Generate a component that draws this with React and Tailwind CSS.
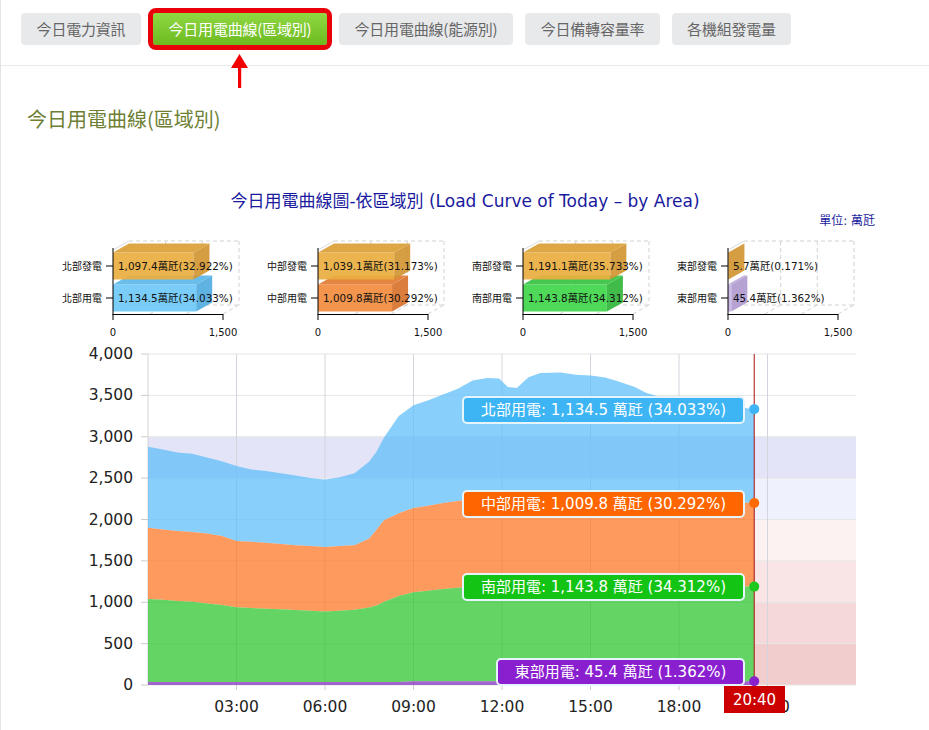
import React from 'react';

const tabs = [
  ['今日電力資訊', 'w-[120px]'],
  ['今日用電曲線(區域別)', 'w-[174px]'],
  ['今日用電曲線(能源別)', 'w-[174px]'],
  ['今日備轉容量率', 'w-[135px]'],
  ['各機組發電量', 'w-[119px]'],
];

// cumulative tops: [hour, 東部, +南部, +中部, +北部]
const rows = [
  [0, 35, 1040, 1900, 2880],
  [0.5, 35, 1030, 1880, 2845],
  [1, 35, 1015, 1862, 2810],
  [1.5, 35, 1005, 1850, 2795],
  [2, 35, 985, 1830, 2750],
  [2.5, 35, 965, 1800, 2705],
  [3, 35, 940, 1740, 2645],
  [3.5, 35, 930, 1730, 2605],
  [4, 35, 922, 1720, 2585],
  [4.5, 35, 915, 1705, 2560],
  [5, 35, 905, 1690, 2530],
  [5.5, 35, 898, 1680, 2500],
  [6, 35, 890, 1668, 2485],
  [6.5, 35, 898, 1680, 2510],
  [7, 35, 910, 1690, 2560],
  [7.5, 35, 935, 1770, 2700],
  [7.75, 35, 960, 1880, 2820],
  [8, 35, 1005, 1990, 2990],
  [8.5, 38, 1075, 2075, 3250],
  [9, 45, 1120, 2140, 3380],
  [9.5, 45, 1140, 2165, 3440],
  [10, 45, 1160, 2200, 3510],
  [10.5, 45, 1175, 2225, 3580],
  [11, 45, 1185, 2245, 3680],
  [11.5, 45, 1195, 2260, 3710],
  [11.9, 45, 1200, 2270, 3705],
  [12.2, 45, 1196, 2256, 3600],
  [12.5, 45, 1198, 2258, 3590],
  [12.9, 45, 1204, 2272, 3720],
  [13.3, 45, 1208, 2285, 3770],
  [14, 45, 1210, 2300, 3775],
  [14.5, 45, 1208, 2295, 3750],
  [15, 45, 1205, 2290, 3740],
  [15.5, 45, 1203, 2285, 3715],
  [16, 45, 1200, 2280, 3662],
  [16.5, 45, 1198, 2270, 3600],
  [16.9, 45, 1196, 2262, 3530],
  [17.5, 45, 1195, 2250, 3470],
  [18, 45, 1194, 2240, 3445],
  [18.5, 45, 1193, 2230, 3420],
  [19, 45, 1192, 2220, 3400],
  [19.5, 45, 1191, 2212, 3380],
  [20, 45, 1190, 2205, 3360],
  [20.55, 45.4, 1189.2, 2199.2, 3333.5],
];

const X = (h) => 147 + h * 29.5;
const Y = (v) => 344 - (v * 331) / 4000;

function areaPath(lo, hi) {
  const top = rows.map((r) => `${X(r[0]).toFixed(1)},${Y(r[hi]).toFixed(1)}`);
  const bot = rows
    .slice()
    .reverse()
    .map((r) => `${X(r[0]).toFixed(1)},${Y(lo < 0 ? 0 : r[lo]).toFixed(1)}`);
  return 'M' + top.join('L') + 'L' + bot.join('L') + 'Z';
}

const minis = [
  {
    labels: ['北部發電', '北部用電'],
    bars: [
      { v: 1097.4, text: '1,097.4萬瓩(32.922%)', c: ['#ebae40', '#dca037', '#d39633'] },
      { v: 1134.5, text: '1,134.5萬瓩(34.033%)', c: ['#6ec9f8', '#5cb8ea', '#52ade0'] },
    ],
  },
  {
    labels: ['中部發電', '中部用電'],
    bars: [
      { v: 1039.1, text: '1,039.1萬瓩(31.173%)', c: ['#ebae40', '#dca037', '#d39633'] },
      { v: 1009.8, text: '1,009.8萬瓩(30.292%)', c: ['#f38d3e', '#e27b31', '#d8722c'] },
    ],
  },
  {
    labels: ['南部發電', '南部用電'],
    bars: [
      { v: 1191.1, text: '1,191.1萬瓩(35.733%)', c: ['#ebae40', '#dca037', '#d39633'] },
      { v: 1143.8, text: '1,143.8萬瓩(34.312%)', c: ['#41d64c', '#37c341', '#31b73b'] },
    ],
  },
  {
    labels: ['東部發電', '東部用電'],
    bars: [
      { v: 5.7, text: '5.7萬瓩(0.171%)', c: ['#ebae40', '#dca037', '#d39633'] },
      { v: 45.4, text: '45.4萬瓩(1.362%)', c: ['#c8b5e4', '#b9a5d9', '#b09cd1'] },
    ],
  },
];

function Bar({ v, y0, c }) {
  const w = (v / 1500) * 110;
  const x0 = 72;
  const h = 27;
  return (
    <g opacity="0.92">
      <rect x={x0} y={y0} width={w} height={h} fill={c[0]} />
      <polygon points={`${x0},${y0} ${x0 + 16},${y0 - 9} ${x0 + w + 16},${y0 - 9} ${x0 + w},${y0}`} fill={c[1]} />
      <polygon
        points={`${x0 + w},${y0} ${x0 + w + 16},${y0 - 9} ${x0 + w + 16},${y0 + h - 9} ${x0 + w},${y0 + h}`}
        fill={c[2]}
      />
    </g>
  );
}

function Mini({ data }) {
  const dash = { stroke: '#d2d2d2', strokeDasharray: '4 3' };
  return (
    <svg width="205" height="112" className="shrink-0 font-['DejaVu_Sans','Noto_Sans_CJK_TC',sans-serif]">
      <line x1="72" y1="21" x2="88" y2="12" stroke="#dcdcdc" />
      <line x1="88" y1="12" x2="198" y2="12" {...dash} />
      <line x1="198" y1="12" x2="198" y2="76" {...dash} />
      <line x1="88" y1="76" x2="198" y2="76" {...dash} />
      <line x1="124.7" y1="12" x2="124.7" y2="76" {...dash} />
      <line x1="161.3" y1="12" x2="161.3" y2="76" {...dash} />
      <line x1="108.7" y1="85" x2="124.7" y2="76" {...dash} />
      <line x1="145.3" y1="85" x2="161.3" y2="76" {...dash} />
      <line x1="182" y1="85" x2="198" y2="76" {...dash} />
      <Bar v={data.bars[1].v} y0={55.5} c={data.bars[1].c} />
      <Bar v={data.bars[0].v} y0={23.5} c={data.bars[0].c} />
      <line x1="72" y1="19" x2="72" y2="86" stroke="#000" />
      <line x1="72" y1="85.5" x2="182" y2="85.5" stroke="#000" />
      <line x1="65" y1="37" x2="72" y2="37" stroke="#000" />
      <line x1="65" y1="69" x2="72" y2="69" stroke="#000" />
      <line x1="182" y1="85" x2="182" y2="91" stroke="#000" />
      <line x1="72" y1="85" x2="72" y2="91" stroke="#000" />
      {data.labels.map((l, i) => (
        <text key={l} x="61" y={37 + i * 32} fontSize="10" textAnchor="end" dominantBaseline="central" fill="#111">
          {l}
        </text>
      ))}
      {data.bars.map((b, i) => (
        <text key={b.text} x="77" y={37 + i * 32} fontSize="10.4" dominantBaseline="central" fill="#111">
          {b.text}
        </text>
      ))}
      <text x="72" y="103" fontSize="10" textAnchor="middle" dominantBaseline="central" fill="#111">
        0
      </text>
      <text x="182" y="103" fontSize="10" textAnchor="middle" dominantBaseline="central" fill="#111">
        1,500
      </text>
    </svg>
  );
}

const tips = [
  { text: '北部用電: 1,134.5 萬瓩 (34.033%)', cls: 'left-[461px] top-[55px] w-[283px] bg-[#3db5f5]' },
  { text: '中部用電: 1,009.8 萬瓩 (30.292%)', cls: 'left-[461px] top-[149px] w-[283px] bg-[#ff6600]' },
  { text: '南部用電: 1,143.8 萬瓩 (34.312%)', cls: 'left-[461px] top-[232px] w-[283px] bg-[#14c414]' },
  { text: '東部用電: 45.4 萬瓩 (1.362%)', cls: 'left-[495px] top-[317px] w-[249px] bg-[#8a1fd0]' },
];

function MainChart() {
  const lineX = X(20.55);
  const yTicks = [0, 500, 1000, 1500, 2000, 2500, 3000, 3500, 4000];
  const xTicks = [3, 6, 9, 12, 15, 18, 21];
  const bands = [
    [2000, 2500, '#eff1fc'],
    [1500, 2000, '#fdf2f2'],
    [1000, 1500, '#f9e5e6'],
    [500, 1000, '#f5d8da'],
    [0, 500, '#f2cdcd'],
  ];
  const last = rows[rows.length - 1];
  return (
    <div className="relative h-[389px] w-full">
      <svg width="929" height="389" className="block font-['DejaVu_Sans','Noto_Sans_CJK_TC',sans-serif]">
        <rect x="147" y={Y(3000)} width="708" height={Y(2500) - Y(3000)} fill="#e3e4f7" />
        {bands.map(([a, b, c]) => (
          <rect key={a} x={lineX} y={Y(b)} width={855 - lineX} height={Y(a) - Y(b)} fill={c} />
        ))}
        {yTicks.map((v) => (
          <g key={v}>
            <line x1="147" y1={Y(v)} x2="855" y2={Y(v)} stroke="#e6e6e6" />
            <line x1="140" y1={Y(v)} x2="147" y2={Y(v)} stroke="#cccccc" />
            <text x="132" y={Y(v)} fontSize="15.5" textAnchor="end" dominantBaseline="central" fill="#222">
              {v.toLocaleString('en-US')}
            </text>
          </g>
        ))}
        {xTicks.map((h) => (
          <g key={h}>
            <line x1={X(h)} y1="13" x2={X(h)} y2="344" stroke="#d4d4de" />
            <line x1={X(h)} y1="344" x2={X(h)} y2="349" stroke="#cccccc" />
            <text x={X(h)} y="366" fontSize="15.5" textAnchor="middle" dominantBaseline="central" fill="#222">
              {String(h).padStart(2, '0')}:00
            </text>
          </g>
        ))}
        <line x1="147" y1="13" x2="147" y2="344" stroke="#d4d4d4" />
        <path d={areaPath(3, 4)} fill="#60bffa" fillOpacity="0.75" />
        <path d={areaPath(2, 3)} fill="#fe7828" fillOpacity="0.75" />
        <path d={areaPath(1, 2)} fill="#30c630" fillOpacity="0.75" />
        <path d={areaPath(-1, 1)} fill="#8b3fc0" fillOpacity="0.8" />
        <line x1={lineX} y1="13" x2={lineX} y2="344" stroke="#a81010" />
        <circle cx={lineX} cy={Y(last[4])} r="5" fill="#3cb4f5" />
        <circle cx={lineX} cy={Y(last[3])} r="5" fill="#ff6a00" />
        <circle cx={lineX} cy={Y(last[2])} r="5" fill="#1fc81f" />
        <circle cx={lineX} cy={Y(last[1])} r="5" fill="#8a22cc" />
        <rect x="723" y="345" width="61" height="27" fill="#cc0000" />
        <text x="753.5" y="358.5" fontSize="15" textAnchor="middle" dominantBaseline="central" fill="#fff">
          20:40
        </text>
      </svg>
      {tips.map((t) => (
        <div
          key={t.text}
          className={`absolute h-[28px] rounded-[5px] border-2 border-[#e6f5fd] text-center font-['DejaVu_Sans','Noto_Sans_CJK_TC',sans-serif] text-[15px] leading-[24px] text-white ${t.cls}`}
        >
          {t.text}
        </div>
      ))}
    </div>
  );
}

export default function App() {
  return (
    <div className="relative min-h-[730px] w-full overflow-hidden border-l border-[#e3e3e3] bg-white font-['Noto_Sans_CJK_TC',sans-serif]">
      <div className="flex h-[66px] items-start gap-[12px] border-b border-[#e9e9e9] pl-[20px] pt-[13px]">
        {tabs.map(([t, w], i) =>
          i === 1 ? (
            <button
              key={t}
              className={`h-[32px] ${w} rounded-[3px] bg-linear-to-b from-[#90d842] to-[#6cba1e] text-center text-[15px] leading-[32px] tracking-[-0.2px] text-white outline-[5px] outline-[#e8000b]`}
            >
              {t}
            </button>
          ) : (
            <button
              key={t}
              className={`h-[32px] ${w} rounded-[4px] bg-[#e8e9eb] text-center text-[15px] leading-[32px] tracking-[-0.2px] text-[#666]`}
            >
              {t}
            </button>
          )
        )}
      </div>
      <svg className="absolute left-[228px] top-[52px]" width="22" height="38" viewBox="0 0 22 38">
        <polygon points="2,16 10.5,2 19,16" fill="#f20000" />
        <rect x="9" y="14" width="3.2" height="22" fill="#f20000" />
      </svg>
      <h2 className="pl-[26px] pt-[40px] text-[20px] leading-[26px] text-[#6e7f35]">今日用電曲線(區域別)</h2>
      <div className="mt-[59px] text-center font-['DejaVu_Sans','Noto_Sans_CJK_TC',sans-serif] text-[17px] leading-[20px] text-[#1a1a9e]">
        今日用電曲線圖-依區域別 (Load Curve of Today – by Area)
      </div>
      <div className="mt-[2px] pr-[54px] text-right font-['DejaVu_Sans','Noto_Sans_CJK_TC',sans-serif] text-[12px] leading-[16px] text-[#1a1a9e]">
        單位: 萬瓩
      </div>
      <div className="flex pl-[40px]">
        {minis.map((m) => (
          <Mini key={m.labels[0]} data={m} />
        ))}
      </div>
      <MainChart />
    </div>
  );
}
